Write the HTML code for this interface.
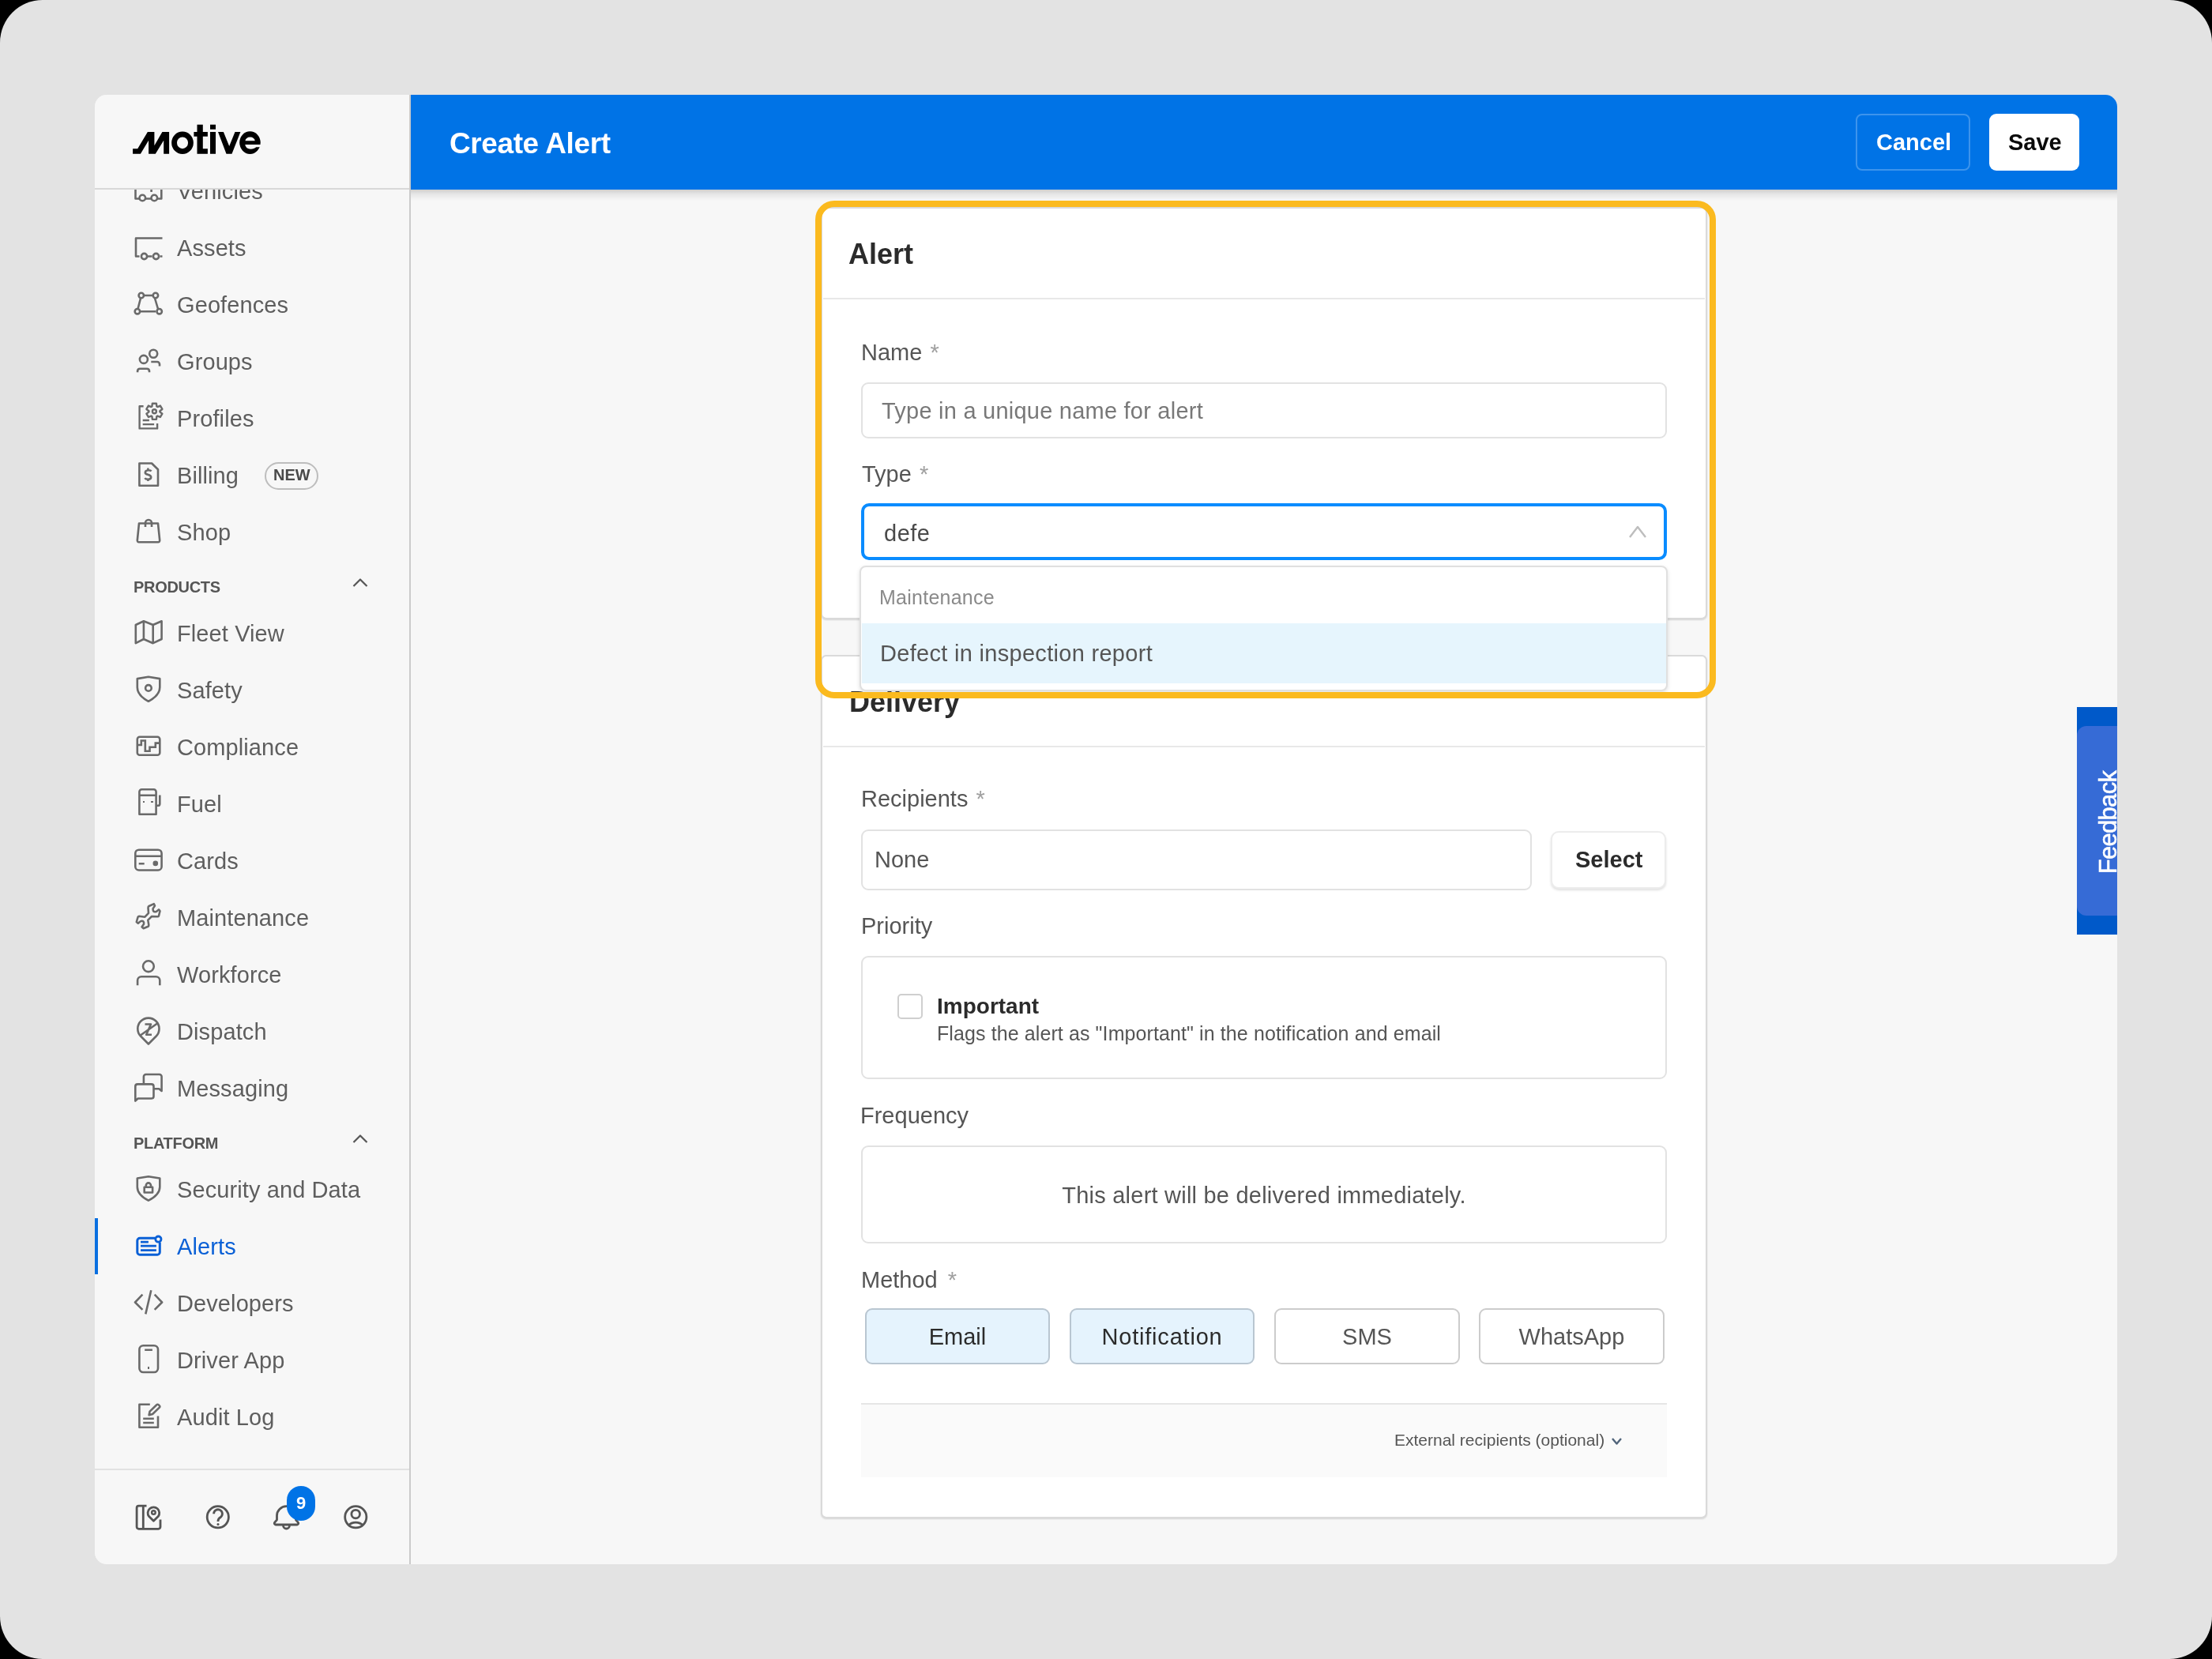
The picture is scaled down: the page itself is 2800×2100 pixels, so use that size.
<!DOCTYPE html>
<html><head><meta charset="utf-8"><title>Create Alert</title>
<style>
html,body{margin:0;padding:0;width:2800px;height:2100px;overflow:hidden;background:#000;}
.t{position:absolute;white-space:pre;font-family:"Liberation Sans", sans-serif;will-change:transform;}
.r{position:absolute;}
.ic{position:absolute;left:0;top:0;}
</style></head><body>
<div class="r" style="left:0px;top:0px;width:2800px;height:2100px;background:#e3e3e3;border-radius:54px;"></div><div id="win" style="position:absolute;left:0;top:0;width:2800px;height:2100px;clip-path:inset(120px 120px 120px 120px round 15px);"><div class="r" style="left:120px;top:120px;width:2560px;height:1860px;background:#f7f7f7;"></div><div class="t" style="left:224px;top:228px;font-size:29px;line-height:29px;font-weight:400;color:#5e5e5e;letter-spacing:0.1px;">Vehicles</div><div class="t" style="left:224px;top:300px;font-size:29px;line-height:29px;font-weight:400;color:#5e5e5e;letter-spacing:0.1px;">Assets</div><div class="t" style="left:224px;top:372px;font-size:29px;line-height:29px;font-weight:400;color:#5e5e5e;letter-spacing:0.1px;">Geofences</div><div class="t" style="left:224px;top:444px;font-size:29px;line-height:29px;font-weight:400;color:#5e5e5e;letter-spacing:0.1px;">Groups</div><div class="t" style="left:224px;top:516px;font-size:29px;line-height:29px;font-weight:400;color:#5e5e5e;letter-spacing:0.1px;">Profiles</div><div class="t" style="left:224px;top:588px;font-size:29px;line-height:29px;font-weight:400;color:#5e5e5e;letter-spacing:0.1px;">Billing</div><div class="t" style="left:224px;top:660px;font-size:29px;line-height:29px;font-weight:400;color:#5e5e5e;letter-spacing:0.1px;">Shop</div><div class="t" style="left:224px;top:788px;font-size:29px;line-height:29px;font-weight:400;color:#5e5e5e;letter-spacing:0.1px;">Fleet View</div><div class="t" style="left:224px;top:860px;font-size:29px;line-height:29px;font-weight:400;color:#5e5e5e;letter-spacing:0.1px;">Safety</div><div class="t" style="left:224px;top:932px;font-size:29px;line-height:29px;font-weight:400;color:#5e5e5e;letter-spacing:0.1px;">Compliance</div><div class="t" style="left:224px;top:1004px;font-size:29px;line-height:29px;font-weight:400;color:#5e5e5e;letter-spacing:0.1px;">Fuel</div><div class="t" style="left:224px;top:1076px;font-size:29px;line-height:29px;font-weight:400;color:#5e5e5e;letter-spacing:0.1px;">Cards</div><div class="t" style="left:224px;top:1148px;font-size:29px;line-height:29px;font-weight:400;color:#5e5e5e;letter-spacing:0.1px;">Maintenance</div><div class="t" style="left:224px;top:1220px;font-size:29px;line-height:29px;font-weight:400;color:#5e5e5e;letter-spacing:0.1px;">Workforce</div><div class="t" style="left:224px;top:1292px;font-size:29px;line-height:29px;font-weight:400;color:#5e5e5e;letter-spacing:0.1px;">Dispatch</div><div class="t" style="left:224px;top:1364px;font-size:29px;line-height:29px;font-weight:400;color:#5e5e5e;letter-spacing:0.1px;">Messaging</div><div class="t" style="left:224px;top:1492px;font-size:29px;line-height:29px;font-weight:400;color:#5e5e5e;letter-spacing:0.1px;">Security and Data</div><div class="t" style="left:224px;top:1564px;font-size:29px;line-height:29px;font-weight:400;color:#0a60d6;letter-spacing:0.1px;">Alerts</div><div class="t" style="left:224px;top:1636px;font-size:29px;line-height:29px;font-weight:400;color:#5e5e5e;letter-spacing:0.1px;">Developers</div><div class="t" style="left:224px;top:1708px;font-size:29px;line-height:29px;font-weight:400;color:#5e5e5e;letter-spacing:0.1px;">Driver App</div><div class="t" style="left:224px;top:1780px;font-size:29px;line-height:29px;font-weight:400;color:#5e5e5e;letter-spacing:0.1px;">Audit Log</div><div class="r" style="left:335px;top:585px;width:68px;height:35px;border:2px solid #bdbdbd;border-radius:18px;box-sizing:border-box;"></div><div class="t" style="left:346px;top:591px;font-size:20px;line-height:20px;font-weight:700;color:#4a4a4a;">NEW</div><div class="t" style="left:169px;top:733px;font-size:20px;line-height:20px;font-weight:700;color:#555555;letter-spacing:-0.3px;">PRODUCTS</div><div class="t" style="left:169px;top:1437px;font-size:20px;line-height:20px;font-weight:700;color:#555555;letter-spacing:-0.3px;">PLATFORM</div><div class="r" style="left:120px;top:1542px;width:4px;height:71px;background:#0a6fe0;"></div><div class="r" style="left:120px;top:120px;width:398px;height:119px;background:#f7f7f7;"></div><div class="r" style="left:120px;top:238px;width:398px;height:2px;background:#d8d8d8;"></div><div class="r" style="left:120px;top:1860px;width:398px;height:120px;background:#f7f7f7;"></div><div class="r" style="left:120px;top:1859px;width:398px;height:2px;background:#e2e2e2;"></div><div class="r" style="left:518px;top:120px;width:2px;height:1860px;background:#cbcbcb;"></div><div class="r" style="left:520px;top:240px;width:2160px;height:14px;background:linear-gradient(to bottom, rgba(0,0,0,0.17), rgba(0,0,0,0.07) 40%, rgba(0,0,0,0.0) 100%);"></div><div class="r" style="left:520px;top:120px;width:2160px;height:120px;background:#0073e6;"></div><div class="t" style="left:569px;top:163px;font-size:37px;line-height:37px;font-weight:700;color:#ffffff;letter-spacing:-0.4px;">Create Alert</div><div class="r" style="left:2349px;top:144px;width:145px;height:72px;border:2px solid rgba(255,255,255,0.24);border-radius:8px;box-sizing:border-box;"></div><div class="t" style="left:2375px;top:166px;font-size:29px;line-height:29px;font-weight:700;color:#ffffff;">Cancel</div><div class="r" style="left:2518px;top:144px;width:114px;height:72px;background:#ffffff;border-radius:9px;"></div><div class="t" style="left:2542px;top:166px;font-size:29px;line-height:29px;font-weight:700;color:#0a0a0a;">Save</div><div class="r" style="left:1039px;top:262px;width:1122px;height:522px;background:#ffffff;border:2px solid #dadada;border-radius:7px;box-sizing:border-box;box-shadow:0 1px 2px rgba(0,0,0,0.14);"></div><div class="t" style="left:1073.5px;top:304px;font-size:36px;line-height:36px;font-weight:700;color:#2b2b2b;">Alert</div><div class="r" style="left:1042px;top:377px;width:1116px;height:2px;background:#e8e8e8;"></div><div class="t" style="left:1089.5px;top:432px;font-size:29px;line-height:29px;font-weight:400;color:#555555;">Name <span style="color:#a0a0a0;margin-left:2px">*</span></div><div class="r" style="left:1090px;top:484px;width:1020px;height:71px;background:#fff;border:2px solid #e2e2e2;border-radius:9px;box-sizing:border-box;"></div><div class="t" style="left:1116px;top:506px;font-size:29px;line-height:29px;font-weight:400;color:#787878;letter-spacing:0.23px;">Type in a unique name for alert</div><div class="t" style="left:1091px;top:586px;font-size:29px;line-height:29px;font-weight:400;color:#555555;">Type <span style="color:#a0a0a0;margin-left:2px">*</span></div><div class="r" style="left:1090px;top:637px;width:1020px;height:72px;background:#fff;border:4px solid #0a8cff;border-radius:10px;box-sizing:border-box;"></div><div class="t" style="left:1119px;top:661px;font-size:29px;line-height:29px;font-weight:400;color:#4a4a4a;letter-spacing:0.5px;">defe</div><div class="r" style="left:1039px;top:829px;width:1122px;height:1093px;background:#ffffff;border:2px solid #dadada;border-radius:7px;box-sizing:border-box;box-shadow:0 1px 2px rgba(0,0,0,0.14);"></div><div class="t" style="left:1075px;top:871px;font-size:36px;line-height:36px;font-weight:700;color:#2b2b2b;">Delivery</div><div class="r" style="left:1042px;top:944px;width:1116px;height:2px;background:#e8e8e8;"></div><div class="t" style="left:1089.5px;top:997px;font-size:29px;line-height:29px;font-weight:400;color:#555555;">Recipients <span style="color:#a0a0a0;margin-left:2px">*</span></div><div class="r" style="left:1090px;top:1050px;width:849px;height:77px;background:#fff;border:2px solid #e2e2e2;border-radius:9px;box-sizing:border-box;"></div><div class="t" style="left:1107px;top:1074px;font-size:29px;line-height:29px;font-weight:400;color:#555555;">None</div><div class="r" style="left:1963px;top:1052px;width:146px;height:73px;background:#fff;border:2px solid #ececec;border-radius:10px;box-sizing:border-box;box-shadow:0 2px 3px rgba(0,0,0,0.12);"></div><div class="t" style="left:1994px;top:1074px;font-size:29px;line-height:29px;font-weight:700;color:#2b2b2b;">Select</div><div class="t" style="left:1089.5px;top:1158px;font-size:29px;line-height:29px;font-weight:400;color:#555555;">Priority</div><div class="r" style="left:1090px;top:1210px;width:1020px;height:156px;background:#fff;border:2px solid #e2e2e2;border-radius:9px;box-sizing:border-box;"></div><div class="r" style="left:1136px;top:1258px;width:32px;height:32px;border:2px solid #cfcfcf;border-radius:5px;box-sizing:border-box;background:#fff;"></div><div class="t" style="left:1186px;top:1260px;font-size:28px;line-height:28px;font-weight:700;color:#2b2b2b;">Important</div><div class="t" style="left:1186px;top:1296px;font-size:25px;line-height:25px;font-weight:400;color:#555555;letter-spacing:0.1px;">Flags the alert as "Important" in the notification and email</div><div class="t" style="left:1088.5px;top:1398px;font-size:29px;line-height:29px;font-weight:400;color:#555555;">Frequency</div><div class="r" style="left:1090px;top:1450px;width:1020px;height:124px;background:#fff;border:2px solid #e2e2e2;border-radius:9px;box-sizing:border-box;"></div><div class="t" style="left:1090px;width:1020px;text-align:center;top:1499px;font-size:29px;line-height:29px;font-weight:400;color:#555555;letter-spacing:0.22px;">This alert will be delivered immediately.</div><div class="t" style="left:1089.5px;top:1606px;font-size:29px;line-height:29px;font-weight:400;color:#555555;">Method <span style="color:#a0a0a0;margin-left:5px">*</span></div><div class="r" style="left:1095px;top:1656px;width:234px;height:71px;background:#e5f3fd;border:2px solid #b9c6d1;border-radius:9px;box-sizing:border-box;"></div><div class="r" style="left:1354px;top:1656px;width:234px;height:71px;background:#e5f3fd;border:2px solid #b9c6d1;border-radius:9px;box-sizing:border-box;"></div><div class="r" style="left:1613px;top:1656px;width:235px;height:71px;background:#fff;border:2px solid #cccccc;border-radius:9px;box-sizing:border-box;"></div><div class="r" style="left:1872px;top:1656px;width:235px;height:71px;background:#fff;border:2px solid #cccccc;border-radius:9px;box-sizing:border-box;"></div><div class="t" style="left:1095px;width:234px;text-align:center;top:1678px;font-size:29px;line-height:29px;font-weight:400;color:#2b2b2b;">Email</div><div class="t" style="left:1354px;width:234px;text-align:center;top:1678px;font-size:29px;line-height:29px;font-weight:400;color:#2b2b2b;letter-spacing:0.8px;">Notification</div><div class="t" style="left:1613px;width:235px;text-align:center;top:1678px;font-size:29px;line-height:29px;font-weight:400;color:#555555;">SMS</div><div class="t" style="left:1872px;width:235px;text-align:center;top:1678px;font-size:29px;line-height:29px;font-weight:400;color:#555555;">WhatsApp</div><div class="r" style="left:1090px;top:1776px;width:1020px;height:2px;background:#e6e6e6;"></div><div class="r" style="left:1090px;top:1778px;width:1020px;height:92px;background:#fafafa;"></div><div class="t" style="left:1765px;top:1812px;font-size:21px;line-height:21px;font-weight:400;color:#555555;">External recipients (optional)</div><div class="r" style="left:1088px;top:716px;width:1023px;height:159px;background:#fff;border:2px solid #e0e0e0;border-radius:8px;box-sizing:border-box;box-shadow:0 2px 5px rgba(0,0,0,0.13);overflow:hidden;"></div><div class="r" style="left:1091px;top:789px;width:1018px;height:76px;background:#e6f5fd;"></div><div class="t" style="left:1113px;top:744px;font-size:25px;line-height:25px;font-weight:400;color:#8a8a8a;letter-spacing:0.25px;">Maintenance</div><div class="t" style="left:1114px;top:813px;font-size:29px;line-height:29px;font-weight:400;color:#555555;letter-spacing:0.3px;">Defect in inspection report</div><div class="r" style="left:1032px;top:254px;width:1140px;height:630px;border:8px solid #fbba1f;border-radius:24px;box-sizing:border-box;"></div><div class="r" style="left:2629px;top:895px;width:51px;height:288px;background:#0059c9;"></div><div class="r" style="left:2629px;top:919px;width:71px;height:240px;background:#366bd6;border-radius:12px;"></div><div class="t" style="left:2629px;top:919px;width:240px;height:51px;transform-origin:0 0;transform:translate(0px,240px) rotate(-90deg);"><div style="position:absolute;left:0;width:236px;top:24px;text-align:center;font-size:31px;line-height:31px;color:#fff;font-weight:400;letter-spacing:-0.7px;-webkit-text-stroke:0.5px #fff;">Feedback</div></div><div class="r" style="left:180.5px;top:1013.7px;width:2.5px;height:2.5px;background:#6a6a6a;"></div><div class="r" style="left:191px;top:1013.7px;width:2.5px;height:2.5px;background:#6a6a6a;"></div><div class="r" style="left:186.6px;top:1730.2px;width:2.5999999999999943px;height:2.599999999999909px;background:#6a6a6a;"></div><svg class="ic" width="2800" height="2100" viewBox="0 0 2800 2100" fill="none" stroke="#6a6a6a" stroke-width="2.6" stroke-linecap="butt" stroke-linejoin="round"><defs><clipPath id="navclip"><rect x="120" y="240" width="400" height="1600"/></clipPath></defs><g clip-path="url(#navclip)"><path d="M171.5 232 V251.5 H176.3 M184.3 251.5 H191.3 M199.3 251.5 H204.3 V236 M191.6 236 V243" /><circle cx="180.3" cy="250.5" r="3.8" /><circle cx="195.3" cy="250.5" r="3.8" /></g><path d="M205.5 301.5 H172 V324.5 H176.5 M186.5 324.5 H192.5 M202.5 324.5 H205.5" /><circle cx="182.5" cy="324.5" r="3.6" /><circle cx="197.5" cy="324.5" r="3.6" /><path d="M181.5 374 H194.5 M174.5 391 L178 377.5 M196 377.5 L200 391 M177.5 394.2 H197" /><circle cx="178.8" cy="374" r="3.2" /><circle cx="196.9" cy="374" r="3.2" /><circle cx="173.9" cy="394.2" r="3.2" /><circle cx="201.7" cy="394.2" r="3.2" /><circle cx="194.2" cy="447.8" r="5.0" /><circle cx="181.9" cy="454.9" r="5.0" /><path d="M174.1 471.3 V469.5 A3 3 0 0 1 177 466.8 H186 A3 3 0 0 1 189 469.5 V471.3" /><path d="M191.3 458 H199 A3 3 0 0 1 202 461 V463.5" /><path d="M181.6 514.2 H176.6 V542.4 H199.1 V536.1" stroke-width="2.4"/><path d="M180.7 532 H188.9 M180.7 537.1 H195.1" stroke-width="2.4"/><path d="M198.36 514.46 L197.92 510.71 L192.88 510.71 L192.44 514.46 L191.38 515.07 L187.92 513.58 L185.40 517.93 L188.43 520.19 L188.43 521.41 L185.40 523.67 L187.92 528.02 L191.38 526.53 L192.44 527.14 L192.88 530.89 L197.92 530.89 L198.36 527.14 L199.42 526.53 L202.88 528.02 L205.40 523.67 L202.37 521.41 L202.37 520.19 L205.40 517.93 L202.88 513.58 L199.42 515.07 Z" stroke-linejoin="round" stroke-width="2.4"/><circle cx="195.4" cy="520.8" r="2.5" stroke-width="2.4"/><path d="M176.4 586.5 H192.1 L200 594.3 V614.7 H176.4 Z" /><path d="M191.5 596.5 C190.5 594.8 184 594.5 183.8 598.2 C183.6 601.5 191.2 600 191.2 604 C191.2 607.8 184.5 607.2 183.4 605.2 M187.4 592.5 V595 M187.4 606.5 V609" /><path d="M176 662.5 H200 L202.2 684 A2 2 0 0 1 200.2 686.2 H175.8 A2 2 0 0 1 173.8 684 Z" /><path d="M184 667 V662 A4 4 0 0 1 192 662 V667" /><path d="M171.8 791 L181.9 786.3 L193.7 791 L204.6 786.3 V809 L193.7 814.2 L181.9 809 L171.8 814.2 Z M181.9 786.3 V809 M193.7 791 V814.2" stroke-linejoin="round"/><path d="M173.8 859.1 L187.9 856.8 L202.3 859.1 V870 C202.3 878 195 884 187.9 887.8 C180.8 884 173.8 878 173.8 870 Z" /><circle cx="187.9" cy="870.9" r="3.8" /><path d="M176.8 932.7 H199.3 A3 3 0 0 1 202.3 935.7 V952.8 A3 3 0 0 1 199.3 955.8 H176.8 A3 3 0 0 1 173.8 952.8 V935.7 A3 3 0 0 1 176.8 932.7 Z" /><path d="M173.8 943 H178.8 V937.5 H183.8 V950.8 H189.5 V945.8 H196.8 V940.6 H202.3" stroke-linejoin="miter"/><path d="M176.4 1030.7 V1002.3 A3 3 0 0 1 179.4 999.3 H194.6 A3 3 0 0 1 197.6 1002.3 V1030.7 Z M176.4 1006.7 H197.6" /><path d="M197.6 1019.7 H200 A2.3 2.3 0 0 0 202.3 1017.4 V1006.4" /><path d="M175.8 1075.7 H200.1 A4.5 4.5 0 0 1 204.6 1080.2 V1097 A4.5 4.5 0 0 1 200.1 1101.5 H175.8 A4.5 4.5 0 0 1 171.3 1097 V1080.2 A4.5 4.5 0 0 1 175.8 1075.7 Z M171.3 1083.8 H204.6 M175.7 1093.2 H182.7" /><circle cx="196.8" cy="1092.9" r="3.3" fill="#6a6a6a" stroke="none"/><path d="M194.8 1144.1 L196 1146.5 L193.6 1150.1 Q193.2 1154.5 196.9 1154.2 Q198.3 1154 201 1151.3 L202.5 1153.3 L201 1159.3 Q200.5 1160.3 199.6 1160.3 L192.1 1160 L187.3 1164.6 L188.3 1170.9 Q188.3 1172.3 187.5 1172.8 L181.5 1175.2 L179.6 1173.3 L182 1169.7 Q182.8 1165.6 179.1 1165.8 Q177.7 1166 174.8 1168.7 L172.8 1167 L174.5 1161 Q175 1159.8 176.2 1159.8 L183.4 1160.7 L188 1155.9 L187.5 1149.2 Q187.5 1147.5 188.5 1147 Z" stroke-linejoin="round"/><circle cx="187.9" cy="1223.2" r="6.9" /><path d="M174.1 1247.2 V1241 A4.8 4.8 0 0 1 178.9 1236.2 H197.5 A4.8 4.8 0 0 1 202.3 1241 V1247.2" /><path d="M187.9 1321.5 L178 1311.5 A13.6 13.6 0 1 1 197.8 1311.5 Z" stroke-linejoin="round"/><path d="M177.4 1310.8 L199.8 1295 M183.5 1296.5 H191 L185.2 1309.8 H192" stroke-linejoin="round"/><path d="M181.9 1371 V1362.8 A2.8 2.8 0 0 1 184.7 1360 H201.8 A2.8 2.8 0 0 1 204.6 1362.8 V1381 L201.3 1378.3 H194.5" stroke-linejoin="round"/><path d="M171.3 1393.6 V1375.2 A2.8 2.8 0 0 1 174.1 1372.4 H191.7 A2.8 2.8 0 0 1 194.5 1375.2 V1387.7 A2.8 2.8 0 0 1 191.7 1390.5 H174.6 Z" stroke-linejoin="round"/><path d="M173.8 1491.5 L187.9 1489.2 L202.3 1491.5 V1502.5 C202.3 1510.5 195 1516 187.9 1519.7 C180.8 1516 173.8 1510.5 173.8 1502.5 Z" /><path d="M182.7 1502.8 H193.1 V1509.5 H182.7 Z M184.8 1502.8 V1500.5 A3.1 3.1 0 0 1 191 1500.5 V1502.8" /><path d="M177 1567.3 H196 M202.3 1573 V1585 A3.2 3.2 0 0 1 199.1 1588.2 H177 A3.2 3.2 0 0 1 173.8 1585 V1570.5 A3.2 3.2 0 0 1 177 1567.3" stroke="#0a60d6" stroke-width="3"/><path d="M178 1572.2 H187.9 M178 1577.2 H197.9 M178 1582.7 H197.9" stroke="#0a60d6" stroke-width="2.8"/><circle cx="200.4" cy="1568.6" r="3.6" stroke="#0a60d6" stroke-width="2.8" fill="#f7f7f7"/><path d="M180.4 1638.6 L171 1648.5 L180.4 1657.9 M195.7 1638.6 L205.1 1648.5 L195.7 1657.9 M191.3 1633.3 L184.3 1663.4" /><path d="M181.4 1703.3 H195 A5 5 0 0 1 200 1708.3 V1732 A5 5 0 0 1 195 1737 H181.4 A5 5 0 0 1 176.4 1732 V1708.3 A5 5 0 0 1 181.4 1703.3 Z M183.2 1708.8 H192.9" /><path d="M189.8 1777.8 H176.4 V1806.7 H200 V1792.6 M181.2 1795.8 H194.8 M181.2 1801 H194.8" /><path d="M188.6 1791.2 L189.6 1786.6 L198.3 1778.2 A1.6 1.6 0 0 1 200.6 1778.2 L201.8 1779.4 A1.6 1.6 0 0 1 201.8 1781.6 L193.1 1790 Z" stroke-linejoin="round"/><path d="M447.5 742 L456 733.5 L464.5 742" stroke="#555" stroke-width="2.2"/><path d="M447.5 1446 L456 1437.5 L464.5 1446" stroke="#555" stroke-width="2.2"/><path d="M185.5 1906.2 H175.6 A2.5 2.5 0 0 0 173.1 1908.7 V1932.8 A2.5 2.5 0 0 0 175.6 1935.3 H200.5 A2.5 2.5 0 0 0 203 1932.8 V1923.6 M181.3 1906.2 V1935.3" stroke="#555555" stroke-width="2.8"/><path d="M194.4 1925.2 L188.6 1919.6 A7.3 7.3 0 1 1 200.2 1919.6 Z" stroke="#555555" stroke-width="2.8" stroke-linejoin="round"/><circle cx="194.4" cy="1914.6" r="2.3" stroke="#555555" stroke-width="2.4"/><circle cx="275.8" cy="1920.3" r="13.6" stroke="#555555" stroke-width="2.8"/><path d="M270.6 1916.2 A5.4 5.4 0 1 1 279.6 1920.2 C277.2 1921.6 276 1922.6 276 1925.2 V1926" stroke="#555555" stroke-width="2.8"/><circle cx="276" cy="1929.6" r="1.5" fill="#555555" stroke="none"/><path d="M349 1930 H376 A1.8 1.8 0 0 0 377.3 1927.1 L374.5 1923.8 V1918.5 A12 11.8 0 0 0 350.5 1918.5 V1923.8 L347.7 1927.1 A1.8 1.8 0 0 0 349 1930 Z M358.5 1931 A4 4 0 0 0 366.5 1931" stroke="#555555" stroke-width="2.8" stroke-linejoin="round"/><circle cx="450.3" cy="1920.3" r="13.6" stroke="#555555" stroke-width="2.8"/><circle cx="450.2" cy="1916.6" r="5.3" stroke="#555555" stroke-width="2.8"/><path d="M440.8 1931.2 C443.5 1928.3 446.8 1927.2 450.3 1927.2 C453.8 1927.2 457 1928.3 459.8 1931.2" stroke="#555555" stroke-width="2.8"/><path d="M2063 680 L2073 667 L2083 680" stroke="#bdbdbd" stroke-width="2.4" stroke-linecap="butt"/><path d="M2041 1821 L2046.5 1827.5 L2052 1821" stroke="#50647a" stroke-width="2.4"/><path d="M168.1 188.2 H174.2 L186.9 167.1 H195.4 V184.2 L205.4 167.1 H214.1 V194.8 H207.2 V177.7 L196.8 194.8 H188.1 V177.7 L177.9 194.8 H168.1 Z" fill="#000" stroke="none"/><ellipse cx="231" cy="180.8" rx="10.45" ry="10.8" fill="none" stroke="#000" stroke-width="6.8"/><path d="M249.5 157.7 H256.8 V167.1 H262.9 V172.8 H256.8 V188.2 H262.9 V194.8 H249.5 V172.8 H245.4 V167.1 H249.5 Z" fill="#000" stroke="none"/><path d="M266 167.1 H273 V194.8 H266 Z M266 157.7 H273 V163.8 H266 Z" fill="#000" stroke="none"/><path d="M276 167.1 H282.9 L290.2 185 L297.5 167.1 H304.4 L293.5 194.8 H286.5 Z" fill="#000" stroke="none"/><ellipse cx="316.45" cy="180.6" rx="13.25" ry="14.3" fill="#000" stroke="none"/><path d="M310.5 178.2 A6.1 4.6 0 0 1 322.7 178.2 Z" fill="#f7f7f7" stroke="none"/><path d="M310.3 183 C310.8 186.5 313.5 188.7 317.3 188.7 C320.3 188.7 322.5 187.7 324.3 186.2 L331 186.2 L331 183 Z" fill="#f7f7f7" stroke="none"/></svg><div class="r" style="left:363px;top:1881px;width:36px;height:44px;background:#0073e6;border-radius:18px;"></div><div class="t" style="left:363px;width:36px;text-align:center;top:1892px;font-size:22px;line-height:22px;font-weight:700;color:#ffffff;">9</div></div>
</body></html>
